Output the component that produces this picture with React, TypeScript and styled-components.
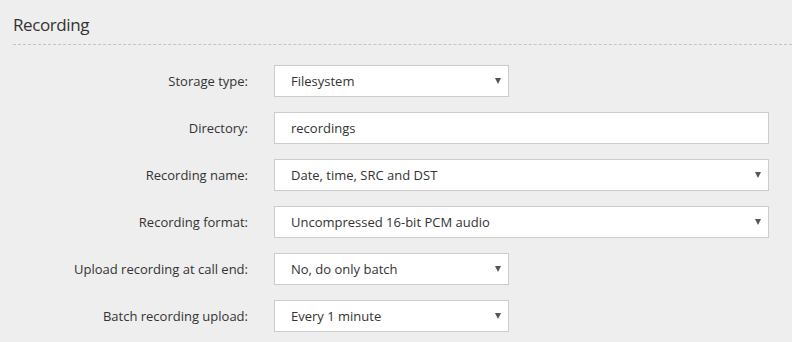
import React from "react";
import styled, { createGlobalStyle } from "styled-components";

const Global = createGlobalStyle`
  html, body { margin: 0; padding: 0; }
  body {
    background: #eeeeee;
    font-family: "Open Sans", "Liberation Sans", sans-serif;
    color: #333;
    width: 792px;
    height: 342px;
    overflow: hidden;
  }
`;

const Page = styled.div`
  padding: 13px 0 0 13px;
`;

const Title = styled.h2`
  margin: 0;
  font-family: "Open Sans", "Liberation Sans", sans-serif;
  font-size: 17px;
  letter-spacing: -0.4px;
  font-weight: 400;
  line-height: 24px;
  color: #333;
  padding-bottom: 7px;
  border-bottom: 1px dashed #c4c4c4;
`;

const Form = styled.div`
  display: grid;
  grid-template-columns: 235px auto;
  column-gap: 26px;
  row-gap: 15px;
  margin-top: 20px;
  align-items: center;
`;

const Label = styled.label`
  text-align: right;
  font-size: 13px;
  color: #333;
`;

const fieldCss = `
  box-sizing: border-box;
  height: 32px;
  border: 1px solid #cccccc;
  background: #ffffff;
  font-family: "Open Sans", "Liberation Sans", sans-serif;
  font-size: 13px;
  color: #333;
  padding: 0 16px;
  outline: none;
`;

const TextInput = styled.input<{ $wide?: boolean }>`
  ${fieldCss}
  width: ${(p) => (p.$wide ? "495px" : "235px")};
`;

const SelectWrap = styled.div<{ $wide?: boolean }>`
  position: relative;
  width: ${(p) => (p.$wide ? "495px" : "235px")};
  &::after {
    content: "";
    position: absolute;
    right: 8px;
    top: 13px;
    border-left: 3.5px solid transparent;
    border-right: 3.5px solid transparent;
    border-top: 6px solid #555;
    pointer-events: none;
  }
`;

const Select = styled.select`
  ${fieldCss}
  width: 100%;
  appearance: none;
  -webkit-appearance: none;
  border-radius: 0;
`;

type Row = { label: string; kind: "select" | "input"; value: string; wide?: boolean };

const rows: Row[] = [
  { label: "Storage type:", kind: "select", value: "Filesystem" },
  { label: "Directory:", kind: "input", value: "recordings", wide: true },
  { label: "Recording name:", kind: "select", value: "Date, time, SRC and DST", wide: true },
  { label: "Recording format:", kind: "select", value: "Uncompressed 16-bit PCM audio", wide: true },
  { label: "Upload recording at call end:", kind: "select", value: "No, do only batch" },
  { label: "Batch recording upload:", kind: "select", value: "Every 1 minute" },
];

export default function App() {
  return (
    <>
      <Global />
      <Page>
        <Title>Recording</Title>
        <Form>
          {rows.map((r) => (
            <React.Fragment key={r.label}>
              <Label>{r.label}</Label>
              {r.kind === "input" ? (
                <TextInput $wide={r.wide} defaultValue={r.value} />
              ) : (
                <SelectWrap $wide={r.wide}>
                  <Select defaultValue={r.value}>
                    <option>{r.value}</option>
                  </Select>
                </SelectWrap>
              )}
            </React.Fragment>
          ))}
        </Form>
      </Page>
    </>
  );
}
